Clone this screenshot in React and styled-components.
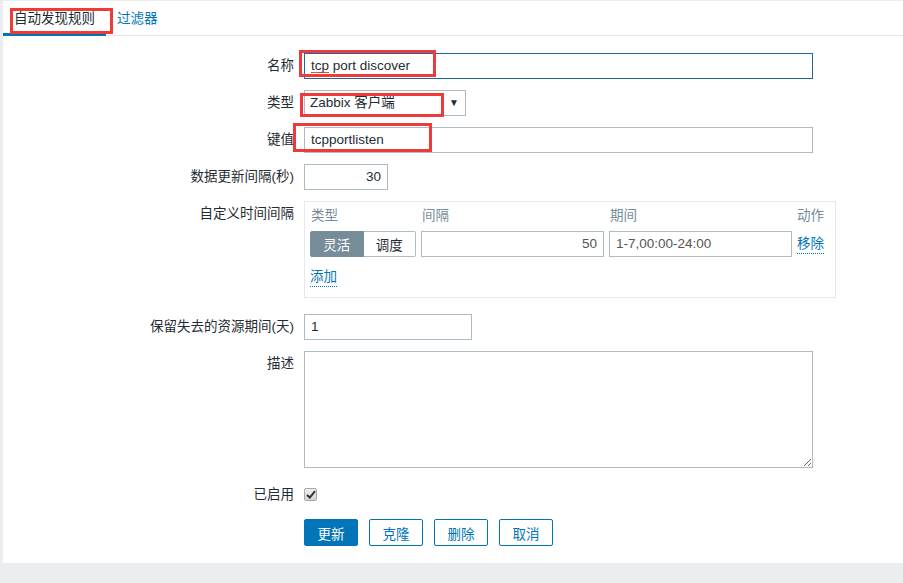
import React from "react";
import styled, { createGlobalStyle } from "styled-components";

const Global = createGlobalStyle`
  html, body { margin: 0; padding: 0; background: #ebeef0; }
  body { font-family: "Liberation Sans", "Noto Sans CJK SC", sans-serif; font-size: 13.5px; color: #1f2c33; }
  * { box-sizing: border-box; }
`;

const Page = styled.div`
  padding: 1px 0 0 3px;
  width: 903px;
  height: 583px;
`;

const Panel = styled.div`
  position: relative;
  background: #fff;
  height: 562px;
`;

const TabBar = styled.div`
  display: flex;
  height: 35px;
  border-bottom: 1px solid #e2e6e9;
`;

const Tab = styled.div`
  padding: 2px 11px 0;
  line-height: 32px;
  height: 35px;
  color: ${p => (p.$active ? "#1f2c33" : "#0275b8")};
  border-bottom: 3px solid ${p => (p.$active ? "#0275b8" : "transparent")};
  white-space: nowrap;
`;

const Form = styled.div`
  padding-top: 6px;
`;

const Row = styled.div`
  display: grid;
  grid-template-columns: 291px 1fr;
  column-gap: 10px;
  align-items: start;
  margin-top: ${p => p.$mt}px;
`;

const Label = styled.div`
  text-align: right;
  line-height: 26px;
  white-space: nowrap;
  color: #1f2c33;
`;

const Field = styled.div`
  width: ${p => p.$w}px;
  height: 26px;
  border: 1px solid ${p => (p.$focus ? "#1d66a0" : "#acbbc2")};
  padding: 0 6px;
  line-height: 24px;
  text-align: ${p => (p.$right ? "right" : "left")};
  color: ${p => p.$color || "#1f2c33"};
  background: #fff;
  white-space: nowrap;
  overflow: hidden;
`;

const Spell = styled.span`
  position: relative;
  display: inline-block;
`;

const Squiggle = styled.svg`
  position: absolute;
  left: 0;
  bottom: 4px;
  width: 100%;
  height: 3px;
`;

const Select = styled.div`
  width: 162px;
  height: 26px;
  border: 1px solid #acbbc2;
  padding: 0 5px;
  display: flex;
  align-items: center;
  justify-content: space-between;
  line-height: 24px;
`;

const Arrow = styled.span`
  font-size: 10px;
  color: #1f2c33;
  margin-right: 1px;
`;

const IntervalBox = styled.div`
  width: 532px;
  height: 97px;
  border: 1px solid #e6e9eb;
  padding: 4px 5px 0 5px;
`;

const IntervalGrid = styled.div`
  display: grid;
  grid-template-columns: 106px 183px 183px 1fr;
  column-gap: 5px;
  row-gap: 5px;
  align-items: center;
`;

const HeadCell = styled.div`
  color: #768d99;
  line-height: 20px;
  padding-left: ${p => p.$pl || 0}px;
`;

const Segmented = styled.div`
  display: flex;
  height: 26px;
`;

const SegBtn = styled.div`
  flex: 1;
  display: flex;
  align-items: center;
  justify-content: center;
  border: 1px solid ${p => (p.$active ? "#768d99" : "#acbbc2")};
  background: ${p => (p.$active ? "#768d99" : "#fff")};
  color: ${p => (p.$active ? "#fff" : "#1f2c33")};
  border-radius: ${p => (p.$first ? "2px 0 0 2px" : "0 2px 2px 0")};
  ${p => (!p.$first ? "border-left: none;" : "")}
`;

const DottedLink = styled.span`
  color: #0275b8;
  border-bottom: 1px dotted #0275b8;
  line-height: 18px;
  display: inline-block;
`;

const AddRow = styled.div`
  margin-top: 11px;
`;

const TextArea = styled.textarea`
  display: block;
  width: 509px;
  height: 117px;
  border: 1px solid #acbbc2;
  resize: both;
  font: inherit;
  margin: 0;
  outline: none;
`;

const CheckCell = styled.div`
  height: 26px;
  display: flex;
  align-items: center;
`;

const CheckBox = styled.span`
  width: 13px;
  height: 13px;
  margin-top: -2px;
  border: 1px solid #a8a8a8;
  border-radius: 2px;
  background: linear-gradient(#eeeeee, #d6d6d6);
  display: flex;
  align-items: center;
  justify-content: center;
`;

const Buttons = styled.div`
  display: flex;
  gap: 11px;
`;

const Button = styled.div`
  width: 54px;
  height: 27px;
  display: flex;
  align-items: center;
  justify-content: center;
  border: 1px solid #0275b8;
  border-radius: 2px;
  background: ${p => (p.$primary ? "#0275b8" : "#fff")};
  color: ${p => (p.$primary ? "#fff" : "#0275b8")};
`;

const Mark = styled.div`
  position: absolute;
  left: ${p => p.$x}px;
  top: ${p => p.$y}px;
  width: ${p => p.$w}px;
  height: ${p => p.$h}px;
  border: 3px solid #ef3a3a;
  pointer-events: none;
`;

export default function App() {
  return (
    <Page>
      <Global />
      <Panel>
        <TabBar>
          <Tab $active>自动发现规则</Tab>
          <Tab>过滤器</Tab>
        </TabBar>
        <Form>
          <Row $mt={11}>
            <Label>名称</Label>
            <Field $w={509} $focus>
              <Spell>
                tcp
                <Squiggle viewBox="0 0 20 3" preserveAspectRatio="none">
                  <path d="M0 2 L1 1 L2 2 L3 1 L4 2 L5 1 L6 2 L7 1 L8 2 L9 1 L10 2 L11 1 L12 2 L13 1 L14 2 L15 1 L16 2 L17 1 L18 2 L19 1 L20 2" fill="none" stroke="#e2231a" strokeWidth="1" />
                </Squiggle>
              </Spell>{" "}
              port discover
            </Field>
          </Row>
          <Row $mt={11}>
            <Label>类型</Label>
            <Select>
              <span>Zabbix 客户端</span>
              <Arrow>▼</Arrow>
            </Select>
          </Row>
          <Row $mt={11}>
            <Label>键值</Label>
            <Field $w={509}>tcpportlisten</Field>
          </Row>
          <Row $mt={11}>
            <Label>数据更新间隔(秒)</Label>
            <Field $w={84} $right>30</Field>
          </Row>
          <Row $mt={11}>
            <Label>自定义时间间隔</Label>
            <IntervalBox>
              <IntervalGrid>
                <HeadCell $pl={1}>类型</HeadCell>
                <HeadCell $pl={1}>间隔</HeadCell>
                <HeadCell $pl={1}>期间</HeadCell>
                <HeadCell>动作</HeadCell>
                <Segmented>
                  <SegBtn $active $first>灵活</SegBtn>
                  <SegBtn>调度</SegBtn>
                </Segmented>
                <Field $w={183} $right $color="#555">50</Field>
                <Field $w={183} $color="#555">1-7,00:00-24:00</Field>
                <div>
                  <DottedLink>移除</DottedLink>
                </div>
              </IntervalGrid>
              <AddRow>
                <DottedLink>添加</DottedLink>
              </AddRow>
            </IntervalBox>
          </Row>
          <Row $mt={16}>
            <Label>保留失去的资源期间(天)</Label>
            <Field $w={168}>1</Field>
          </Row>
          <Row $mt={11}>
            <Label>描述</Label>
            <TextArea readOnly defaultValue="" />
          </Row>
          <Row $mt={14}>
            <Label>已启用</Label>
            <CheckCell>
              <CheckBox>
                <svg width="10" height="9" viewBox="0 0 10 9">
                  <path d="M1 5 L3.8 7.6 L9 1.2" fill="none" stroke="#333" strokeWidth="2" />
                </svg>
              </CheckBox>
            </CheckCell>
          </Row>
          <Row $mt={11}>
            <div />
            <Buttons>
              <Button $primary>更新</Button>
              <Button>克隆</Button>
              <Button>删除</Button>
              <Button>取消</Button>
            </Buttons>
          </Row>
        </Form>
        <Mark $x={7} $y={7} $w={103} $h={26} />
        <Mark $x={296} $y={49} $w={137} $h={27} />
        <Mark $x={297} $y={92} $w={144} $h={24} />
        <Mark $x={290} $y={122} $w={139} $h={29} />
      </Panel>
    </Page>
  );
}
